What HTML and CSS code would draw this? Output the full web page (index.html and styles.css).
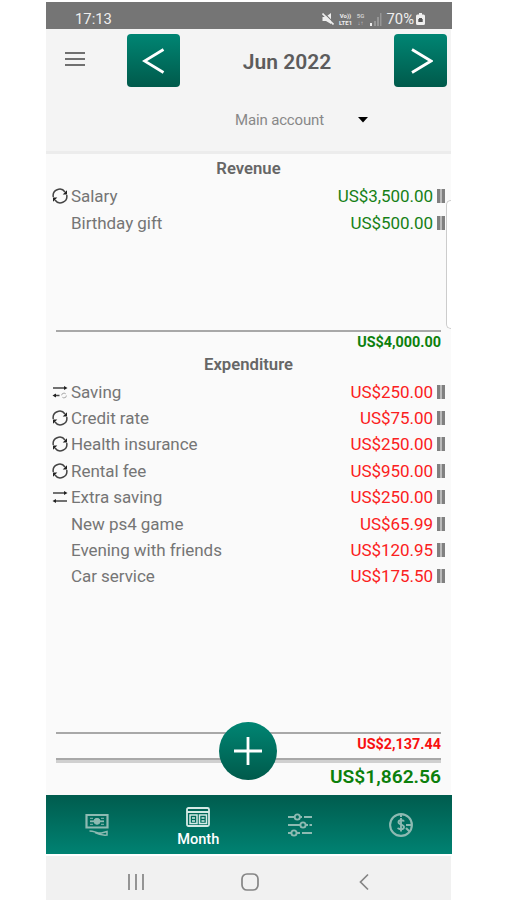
FILE: index.html
```
<!DOCTYPE html>
<html lang="en">

<head>
	<title>Monthly budget</title>
	<meta charset="utf-8" />
	<link rel="stylesheet" href="styles.css">
</head>

<body>
	<!-- icons used more than once -->
	<svg class="defs">
		<symbol id="cycle" viewBox="0 0 16 16">
			<path d="M1.300 9A6.500 6.500 0 0 1 13 4M14.700 7A6.500 6.500 0 0 1 3 12" fill="none" stroke="#444" stroke-width="1.500"/>
			<path d="M15 2.200v4.300h-4.300zM1 13.800V9.500h4.300z" fill="#222"/>
		</symbol>
		<symbol id="swap" viewBox="0 0 16 16">
			<path d="M1 4h13M2 12h13" stroke="#444" stroke-width="1.500"/>
			<path d="M12 2l3.500 2L12 6zM4 10L.500 12 4 14z" fill="#222"/>
		</symbol>
		<symbol id="swapcycle" viewBox="0 0 16 16">
			<path d="M1 4h13M2 11.500h5.500" stroke="#444" stroke-width="1.500"/>
			<path d="M12 2l3.500 2L12 6zM4 9.500L.500 11.500 4 13.500z" fill="#222"/>
			<circle cx="12" cy="11.500" r="2.400" fill="none" stroke="#aaa" stroke-width="1" stroke-dasharray="5 2"/>
		</symbol>
	</svg>

	<div class="phone">
		<div class="status">
			<span class="clock">17:13</span>
			<svg class="mute" viewBox="0 0 12 12"><path d="M.5 4h3L9 0v11L4 8H.5z" fill="#eee"/><path d="M2 0l10 10" stroke="#757575" stroke-width="1.200"/><path d="M.5.5l11 11" stroke="#eee" stroke-width="1.600"/></svg>
			<span class="lte"><span>Vo))</span><span>LTE1</span></span>
			<span class="net"><span>5G</span><span>↓↑</span></span>
			<svg class="signal" viewBox="0 0 12 13"><path d="M0 10h2v3H0z" fill="#eee"/><path d="M4 8h2v5H4zM7 4h2v9H7zM10 0h1.500v13H10z" fill="#969696"/></svg>
			<span class="percent">70%</span>
			<svg class="battery" viewBox="0 0 9 12"><path d="M3 0h3v1.500h1.500q1.500 0 1.500 1.500v7.500q0 1.500-1.500 1.500h-6Q0 12 0 10.500V3q0-1.500 1.500-1.500H3z" fill="#eee"/><path d="M3 5h3v1h.7v3H2.300V6H3z" fill="#555"/></svg>
		</div>

		<div class="header">
			<div class="months">
				<svg class="menu" viewBox="0 0 20 16"><path d="M0 2h20M0 8h20M0 14h20" stroke="#707070" stroke-width="2"/></svg>
				<button class="arrow"><svg viewBox="0 0 24 26"><path d="M21.500 1.500L2.500 13l19 11.500"/></svg></button>
				<h1>Jun 2022</h1>
				<button class="arrow"><svg viewBox="0 0 24 26"><path d="M3 1.500L22 13 3 24.500"/></svg></button>
			</div>
			<div class="account">
				<span>Main account</span>
				<svg viewBox="0 0 10 6"><path d="M0 0h10L5 5.500z"/></svg>
			</div>
		</div>

		<div class="content">
			<h2>Revenue</h2>
			<div class="list revenue">
				<div class="row"><svg><use href="#cycle"/></svg><span class="name">Salary</span><span class="sum">US$3,500.00</span><i></i></div>
				<div class="row"><svg></svg><span class="name">Birthday gift</span><span class="sum">US$500.00</span><i></i></div>
			</div>
			<div class="total green">US$4,000.00</div>

			<h2 class="second">Expenditure</h2>
			<div class="list expense">
				<div class="row"><svg><use href="#swapcycle"/></svg><span class="name">Saving</span><span class="sum">US$250.00</span><i></i></div>
				<div class="row"><svg><use href="#cycle"/></svg><span class="name">Credit rate</span><span class="sum">US$75.00</span><i></i></div>
				<div class="row"><svg><use href="#cycle"/></svg><span class="name">Health insurance</span><span class="sum">US$250.00</span><i></i></div>
				<div class="row"><svg><use href="#cycle"/></svg><span class="name">Rental fee</span><span class="sum">US$950.00</span><i></i></div>
				<div class="row"><svg><use href="#swap"/></svg><span class="name">Extra saving</span><span class="sum">US$250.00</span><i></i></div>
				<div class="row"><svg></svg><span class="name">New ps4 game</span><span class="sum">US$65.99</span><i></i></div>
				<div class="row"><svg></svg><span class="name">Evening with friends</span><span class="sum">US$120.95</span><i></i></div>
				<div class="row"><svg></svg><span class="name">Car service</span><span class="sum">US$175.50</span><i></i></div>
			</div>
			<div class="total red">US$2,137.44</div>
			<div class="balance">US$1,862.56</div>

			<div class="edge"></div>
			<button class="add"><svg viewBox="0 0 28 28"><path d="M14 0v28M0 14h28"/></svg></button>
		</div>

		<div class="tabs">
			<div class="tab">
				<svg viewBox="0 0 24 24"><path d="M1.500 2h21v12.500h-21z" stroke-width="2.200"/><path d="M5 8.300h14" stroke-width="1.800"/><path d="M5 5.300h3M16 5.300h3M5 11.300h3M16 11.300h3" stroke-width="1"/><circle cx="12" cy="8.300" r="3" fill="#8dbab2"/><path d="M4.500 18c5 0 8 2.500 12 2l5.500-1.500v3.500c-4 .5-9-1-12-2.500" stroke-width="1.500"/></svg>
			</div>
			<div class="tab active">
				<svg viewBox="0 0 24 20"><rect x="1" y="1" width="22" height="18" rx="1.500" stroke-width="1.800"/><path d="M1 5h22" stroke-width="2"/><path d="M4 8h7v8.500H4zM13.500 8h7v8.500h-7z" stroke-width="1.500"/><path d="M6 11h3M6 14h3M15.500 11h3M15.500 14h3" stroke-width="1.500"/></svg>
				<span>Month</span>
			</div>
			<div class="tab">
				<svg viewBox="0 0 24 24"><path d="M0 4h6.500M12 4h2M16 4h8M0 12h12M18 12h2M21.500 12H24M0 20h3M9 20h3M14 20h10" stroke-width="1.900"/><circle cx="9.300" cy="4" r="2.600" stroke-width="1.900"/><circle cx="15" cy="12" r="2.600" stroke-width="1.900"/><circle cx="6" cy="20" r="2.600" stroke-width="1.900"/></svg>
			</div>
			<div class="tab">
				<svg viewBox="0 0 24 24"><circle cx="12" cy="12" r="10.900" stroke-width="2.100"/><path d="M12 1v3M17 12h6M17 15l3.500 3.500" stroke-width="2"/><path d="M15 8.500c-.5-1.500-5.500-2-5.500.8 0 2.700 5.500 2 5.500 4.700 0 3-5.500 2.500-6 .7M12 5v13.500" stroke-width="1.900"/></svg>
			</div>
		</div>

		<div class="nav">
			<svg viewBox="0 0 18 18"><path d="M2 1v16M9 1v16M16 1v16"/></svg>
			<svg viewBox="0 0 18 18"><rect x="1" y="1" width="16" height="16" rx="5"/></svg>
			<svg viewBox="0 0 18 18"><path d="M13 1.500L5.500 9l7.500 7.500"/></svg>
		</div>
	</div>
</body>
</html>
```
FILE: styles.css
```
* {
	box-sizing: border-box;
}

body {
	margin: 0;
	background: #fff;
	font-family: Roboto, "Liberation Sans", sans-serif;
	color: #666;
}

h1, h2 {
	margin: 0;
}

svg {
	display: block;
	flex: none;
}

button {
	padding: 0;
	border: 0;
	display: flex;
	align-items: center;
	justify-content: center;
	background: linear-gradient(#008573, #005a4b);
}

.defs {
	display: none;
}

.phone {
	width: 406px;
	height: 898px;
	margin: 2px 0 0 46px;
	display: flex;
	flex-direction: column;
}

/* status bar */
.status {
	height: 27px;
	padding: 7px 27px 0 29px;
	background: #757575;
	color: #eee;
	display: flex;
	align-items: center;
}

.clock {
	font-size: 14.8px;
	margin-right: auto;
}

.mute {
	width: 12px;
	height: 12px;
	margin-right: 4px;
}

.lte, .net {
	display: flex;
	flex-direction: column;
	font-size: 6px;
	line-height: 7px;
	font-weight: 700;
	text-align: center;
}

.lte {
	width: 16px;
}

.net {
	width: 10px;
	margin: 0 4px 0 2px;
	color: #ccc;
}

.signal {
	width: 12px;
	height: 13px;
	margin-right: 5px;
}

.percent {
	font-size: 14.8px;
}

.battery {
	width: 9px;
	height: 12px;
	margin-left: 2px;
}

/* month switch + account */
.header {
	width: 405px;
	height: 125px;
	background: #f4f4f4;
	border-bottom: 3px solid #ececec;
}

.months {
	display: flex;
	align-items: center;
	padding: 5px 4px 0 19px;
}

.menu {
	width: 20px;
	height: 16px;
	margin: -4px 42px 0 0;
}

.arrow {
	width: 53px;
	height: 53px;
	border-radius: 4px;
}

.arrow svg {
	width: 24px;
	height: 26px;
}

.arrow path {
	fill: none;
	stroke: #fff;
	stroke-width: 2.8;
}

h1 {
	flex: 1;
	padding-top: 2px;
	text-align: center;
	font-size: 21px;
	font-weight: 600;
	color: #5c5c5c;
}

.account {
	display: flex;
	align-items: center;
	margin: 23px 0 0 189px;
	font-size: 15px;
	line-height: 20px;
	letter-spacing: -.15px;
	color: #888;
}

.account svg {
	width: 10px;
	height: 6px;
	margin-left: 29px;
	fill: #000;
}

/* lists */
.content {
	position: relative;
	width: 405px;
	height: 641px;
	background: #fafafa;
}

h2 {
	height: 29px;
	line-height: 30px;
	text-align: center;
	font-size: 16.7px;
	font-weight: 600;
}

.second {
	height: 25.5px;
	line-height: 23px;
}

.list {
	margin: 0 10px;
	border-bottom: 2px solid #a8a8a8;
}

.revenue {
	height: 149px;
	color: #168016;
}

.expense {
	height: 355.5px;
	color: #fa2020;
}

.row {
	height: 26.4px;
	margin: 0 -5px 0 -4px;
	display: flex;
	align-items: center;
	font-size: 17px;
	letter-spacing: -.05px;
}

.row svg {
	width: 16px;
	height: 16px;
	margin-right: 3px;
}

.name {
	flex: 1;
	color: #757575;
}

.row i {
	width: 8px;
	height: 14px;
	margin: 0 1px 0 4px;
	border: solid #808080;
	border-width: 0 3px;
	background: #bbb;
}

.total {
	height: 21px;
	padding-right: 10px;
	text-align: right;
	font-size: 14.4px;
	line-height: 22px;
	font-weight: 700;
}

.green {
	color: #0c800c;
}

.red {
	height: 24px;
	color: #f81010;
}

.balance {
	margin: 0 10px;
	border-top: 2px solid #a8a8a8;
	box-shadow: inset 0 3px #d0d0d0;
	height: 37px;
	line-height: 33px;
	text-align: right;
	font-size: 19.2px;
	font-weight: 600;
	color: #0c800c;
}

/* side panel handle on the right edge */
.edge {
	position: absolute;
	right: 0;
	top: 46px;
	width: 5px;
	height: 129px;
	border: 1.5px solid #ccc;
	border-right: 0;
	border-radius: 5px 0 0 5px;
	background: #fff;
}

.account svg {
	margin-left: 29px;
	position: relative;
	left: 0;
}

.account span {
	width: 94px;
}

.add {
	position: absolute;
	left: 173px;
	top: 568px;
	width: 58px;
	height: 58px;
	border-radius: 50%;
}

.add svg {
	width: 28px;
	height: 28px;
}

.add path {
	stroke: #fff;
	stroke-width: 2.8;
}

/* bottom tabs */
.tabs {
	height: 59px;
	display: flex;
	background: linear-gradient(#005c4e, #008272);
}

.tab {
	flex: 1;
	display: flex;
	flex-direction: column;
	align-items: center;
	justify-content: center;
}

.tab svg {
	width: 24px;
	height: 24px;
	fill: none;
	stroke: #8dbab2;
}

.active {
	padding-top: 4px;
	color: #fff;
	font-size: 14.6px;
	font-weight: 500;
	line-height: 16px;
}

.active svg {
	height: 20px;
	margin-bottom: 4px;
	stroke: #d5eae6;
}

.nav {
	width: 405px;
	height: 44px;
	margin-top: 2px;
	padding: 8px 78px 0 81px;
	display: flex;
	align-items: center;
	justify-content: space-between;
	background: #f1f1f1;
}

.nav svg {
	width: 18px;
	height: 18px;
	fill: none;
	stroke: #858585;
	stroke-width: 1.7;
}
```
